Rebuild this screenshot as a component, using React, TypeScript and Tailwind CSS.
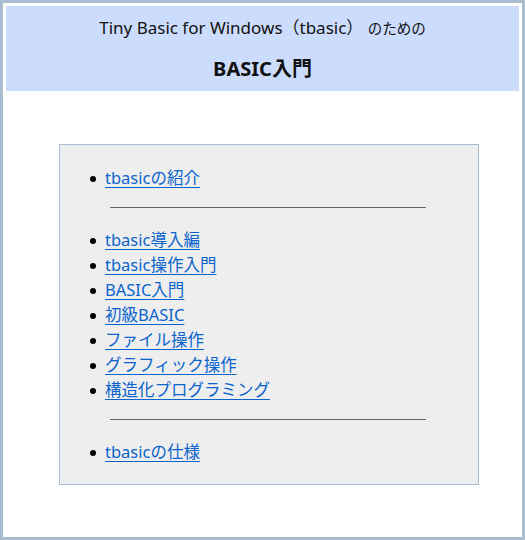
const links1 = ['tbasic導入編', 'tbasic操作入門', 'BASIC入門', '初級BASIC', 'ファイル操作', 'グラフィック操作', '構造化プログラミング'];

function Item({ label }: { label: string }) {
  return (
    <li className="flex items-center h-[25px]">
      <span className="w-[6px] h-[6px] rounded-full bg-black ml-[30px] mr-[9px]" />
      <a href="#" className="text-[#0a64cc] underline underline-offset-[3px] decoration-1">
        {label}
      </a>
    </li>
  );
}

export default function App() {
  return (
    <div
      className="w-[525px] h-[540px] border-[3px] border-[#a9bdcf] bg-white p-[3px] text-[16.5px] text-[#111]"
      style={{ fontFamily: '"Noto Sans", "Noto Sans CJK JP", sans-serif' }}
    >
      <header className="bg-[#ccdcfc] h-[85px] flex flex-col items-center pt-[9px]">
        <p className="leading-[26px] text-[17px]">
          Tiny Basic for Windows（tbasic） <span className="text-[14.5px]">のための</span>
        </p>
        <h1 className="font-bold text-[20px] leading-[28px] mt-[14px]">BASIC入門</h1>
      </header>

      <section className="ml-[53px] mt-[53px] w-[420px] bg-[#eeeeee] border border-[#a9bdcf] pt-[21px] pb-[19px]">
        <ul>
          <Item label="tbasicの紹介" />
        </ul>
        <hr className="ml-[50px] mr-[52px] mt-[16px] mb-[20px] border-t border-[#666]" />
        <ul>
          {links1.map(l => (
            <Item key={l} label={l} />
          ))}
        </ul>
        <hr className="ml-[50px] mr-[52px] mt-[16px] mb-[20px] border-t border-[#666]" />
        <ul>
          <Item label="tbasicの仕様" />
        </ul>
      </section>
    </div>
  );
}
